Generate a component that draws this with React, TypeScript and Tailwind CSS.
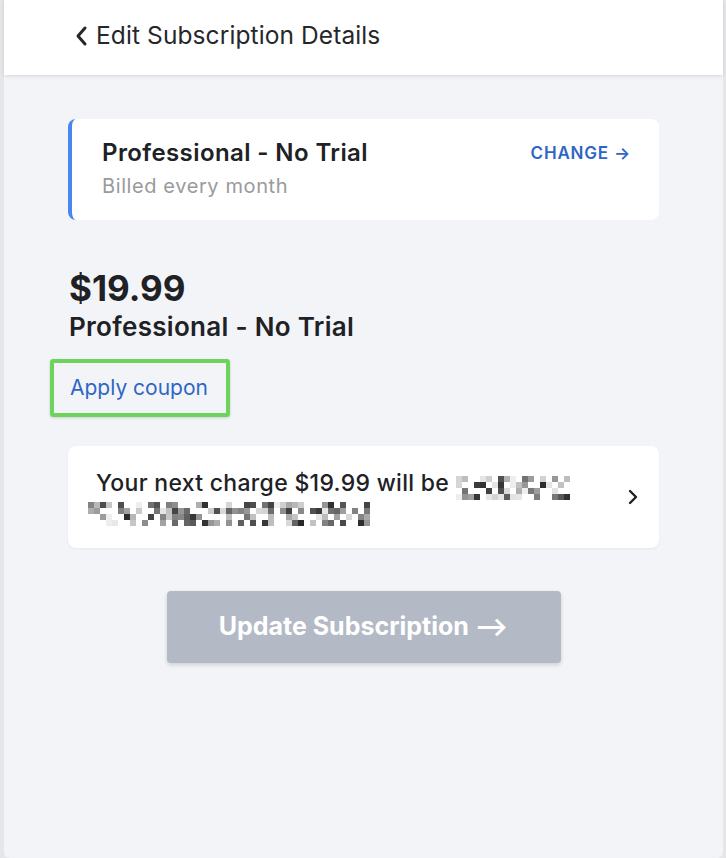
import React from "react";

function Pixels({ cols, rows, seed }: { cols: number; rows: number; seed: number }) {
  const rects: React.ReactNode[] = [];
  let s = seed;
  const rnd = () => {
    s = (s * 9301 + 49297) % 233280;
    return s / 233280;
  };
  for (let r = 0; r < rows; r++) {
    for (let c = 0; c < cols; c++) {
      const v = rnd();
      if (v < 0.4) continue;
      const g = Math.floor(40 + (1 - v) * 340);
      const gg = Math.min(238, g);
      rects.push(
        <rect key={r + "-" + c} x={c * 6} y={r * 6} width={6} height={6} fill={`rgb(${gg},${gg},${gg})`} />
      );
    }
  }
  return (
    <svg width={cols * 6} height={rows * 6} className="inline-block align-middle">
      {rects}
    </svg>
  );
}

export default function App() {
  return (
    <div
      className="flex h-[858px] w-[726px] bg-[#e6e6e8]"
      style={{ fontFamily: "Inter, 'Noto Sans', sans-serif" }}
    >
      <div className="ml-[4px] flex w-[719px] flex-col rounded-b-[6px] bg-[#f3f4f8]">
        <div className="flex h-[75px] items-center bg-white pb-[4px] pl-[69px] shadow-[0_1px_4px_rgba(0,0,0,0.12)]">
          <svg width="18" height="22" viewBox="0 0 18 22" className="mr-[5px]">
            <path d="M12 3 L5 11 L12 19" fill="none" stroke="#26272b" strokeWidth="3" strokeLinecap="round" strokeLinejoin="round" />
          </svg>
          <span className="text-[24.5px] text-[#26272b] tracking-[0.1px]">Edit Subscription Details</span>
        </div>

        <div className="flex flex-col px-[64px] pt-[44px]">
          <div className="flex h-[101px] justify-between rounded-[8px] border-l-[4px] border-[#4a86f0] bg-white pl-[30px] pr-[28px] pt-[18px]">
            <div className="flex flex-col">
              <span className="text-[24px] font-semibold leading-[32px] tracking-[0.4px] text-[#202125]">Professional - No Trial</span>
              <span className="mt-[4px] text-[20px] leading-[26px] tracking-[0.6px] text-[#9a9a9c]">Billed every month</span>
            </div>
            <span className="mt-[4px] text-[17px] font-semibold tracking-[0.8px] text-[#2f66c4]">CHANGE →</span>
          </div>

          <div className="ml-[1px] mt-[48px] text-[35px] font-bold leading-[40px] text-[#202125]">$19.99</div>
          <div className="ml-[1px] mt-[3px] text-[26px] font-semibold leading-[32px] tracking-[0.3px] text-[#202125]">Professional - No Trial</div>

          <div className="-ml-[18px] mt-[16px] flex h-[58px] w-[180px] items-center rounded-[3px] border-[4px] border-[#6dd35c] pl-[16px] shadow-[0_1px_3px_rgba(0,0,0,0.15)]">
            <span className="text-[21px] text-[#2f66c4]">Apply coupon</span>
          </div>

          <div className="mt-[29px] flex h-[102px] items-center justify-between rounded-[8px] bg-white pl-[28px] pr-[20px] shadow-[0_1px_3px_rgba(0,0,0,0.05)]">
            <div className="-mt-[4px] flex flex-col">
              <div className="flex items-center text-[23px] font-medium leading-[30px] tracking-[0.3px] text-[#202125]">
                <span>Your next charge $19.99 will be</span>
                <span className="ml-[7px] mt-[8px]"><Pixels cols={19} rows={4} seed={7} /></span>
              </div>
              <div className="-ml-[8px] -mt-[1px]">
                <Pixels cols={47} rows={4} seed={13} />
              </div>
            </div>
            <svg width="12" height="18" viewBox="0 0 12 18">
              <path d="M3 3 L9 9 L3 15" fill="none" stroke="#202125" strokeWidth="2.4" strokeLinecap="round" strokeLinejoin="round" />
            </svg>
          </div>

          <div className="mt-[43px] flex justify-center">
            <div className="flex h-[72px] w-[394px] items-center justify-center rounded-[4px] bg-[#b3bac5] shadow-[0_2px_4px_rgba(0,0,0,0.15)]">
              <span className="text-[25px] font-bold text-white">Update Subscription ⟶</span>
            </div>
          </div>
        </div>
      </div>
    </div>
  );
}
